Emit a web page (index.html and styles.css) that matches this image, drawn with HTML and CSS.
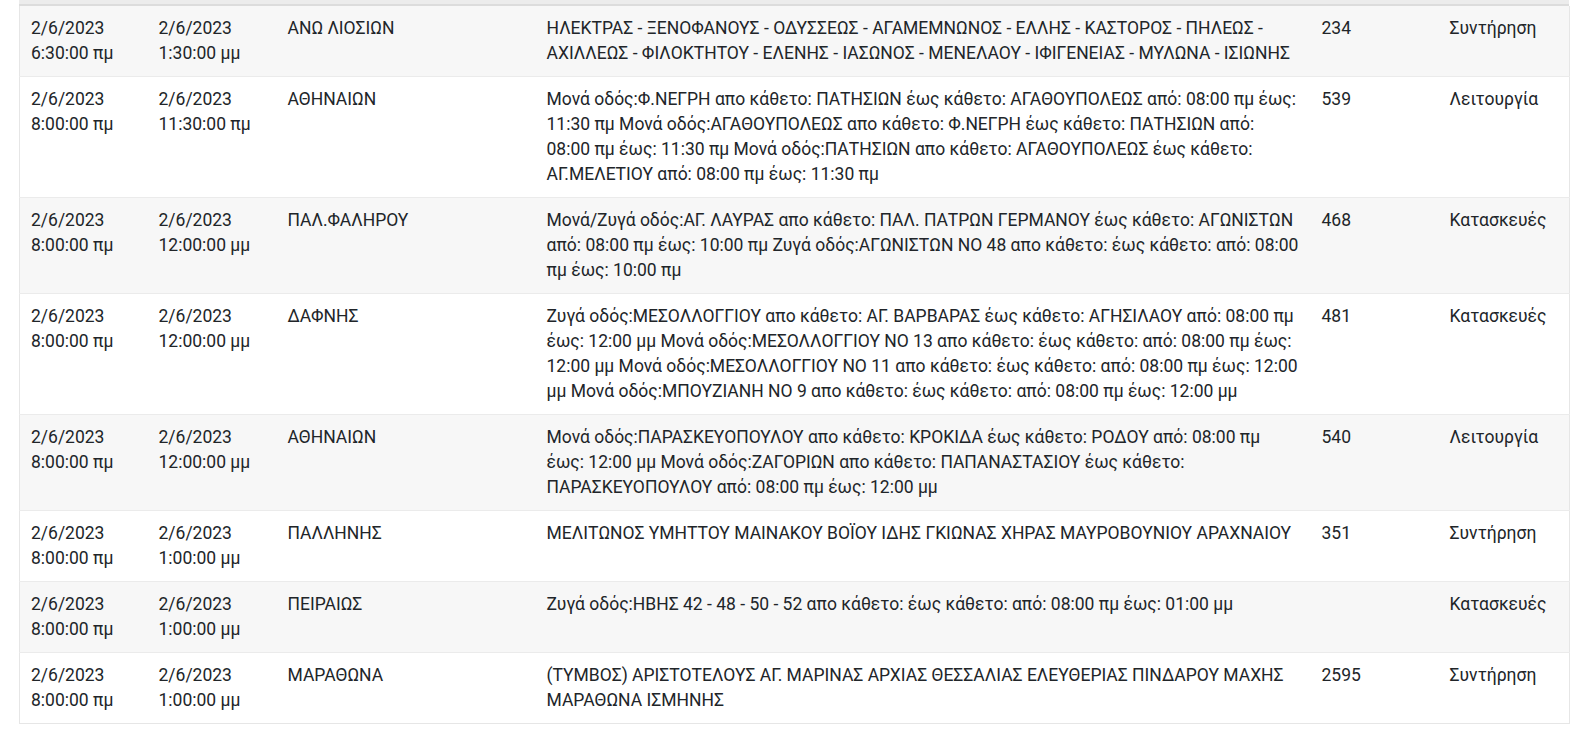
FILE: index.html
```html
<!DOCTYPE html>
<html lang="el">
<head>
    <meta charset="UTF-8">
    <meta name="viewport" content="width=device-width, initial-scale=1.0">
    <title>Διακοπές κυκλοφορίας</title>
    <link rel="stylesheet" href="styles.css">
</head>
<body>

    <div class="container">
        <div class="table-top"></div>
        <table class="works-table">
            <colgroup>
                <col class="col-from">
                <col class="col-to">
                <col class="col-area">
                <col class="col-desc">
                <col class="col-id">
                <col class="col-type">
            </colgroup>
            <tbody>
                <tr>
                    <td>2/6/2023<br>6:30:00 πμ</td>
                    <td>2/6/2023<br>1:30:00 μμ</td>
                    <td>ΑΝΩ ΛΙΟΣΙΩΝ</td>
                    <td>ΗΛΕΚΤΡΑΣ - ΞΕΝΟΦΑΝΟΥΣ - ΟΔΥΣΣΕΩΣ - ΑΓΑΜΕΜΝΩΝΟΣ - ΕΛΛΗΣ - ΚΑΣΤΟΡΟΣ - ΠΗΛΕΩΣ - ΑΧΙΛΛΕΩΣ - ΦΙΛΟΚΤΗΤΟΥ - ΕΛΕΝΗΣ - ΙΑΣΩΝΟΣ - ΜΕΝΕΛΑΟΥ - ΙΦΙΓΕΝΕΙΑΣ - ΜΥΛΩΝΑ - ΙΣΙΩΝΗΣ</td>
                    <td>234</td>
                    <td>Συντήρηση</td>
                </tr>
                <tr>
                    <td>2/6/2023<br>8:00:00 πμ</td>
                    <td>2/6/2023<br>11:30:00 πμ</td>
                    <td>ΑΘΗΝΑΙΩΝ</td>
                    <td>Μονά οδός:Φ.ΝΕΓΡΗ απο κάθετο: ΠΑΤΗΣΙΩΝ έως κάθετο: ΑΓΑΘΟΥΠΟΛΕΩΣ από: 08:00 πμ έως: 11:30 πμ Μονά οδός:ΑΓΑΘΟΥΠΟΛΕΩΣ απο κάθετο: Φ.ΝΕΓΡΗ έως κάθετο: ΠΑΤΗΣΙΩΝ από: 08:00 πμ έως: 11:30 πμ Μονά οδός:ΠΑΤΗΣΙΩΝ απο κάθετο: ΑΓΑΘΟΥΠΟΛΕΩΣ έως κάθετο: ΑΓ.ΜΕΛΕΤΙΟΥ από: 08:00 πμ έως: 11:30 πμ</td>
                    <td>539</td>
                    <td>Λειτουργία</td>
                </tr>
                <tr>
                    <td>2/6/2023<br>8:00:00 πμ</td>
                    <td>2/6/2023<br>12:00:00 μμ</td>
                    <td>ΠΑΛ.ΦΑΛΗΡΟΥ</td>
                    <td>Μονά/Ζυγά οδός:ΑΓ. ΛΑΥΡΑΣ απο κάθετο: ΠΑΛ. ΠΑΤΡΩΝ ΓΕΡΜΑΝΟΥ έως κάθετο: ΑΓΩΝΙΣΤΩΝ από: 08:00 πμ έως: 10:00 πμ Ζυγά οδός:ΑΓΩΝΙΣΤΩΝ ΝΟ 48 απο κάθετο: έως κάθετο: από: 08:00 πμ έως: 10:00 πμ</td>
                    <td>468</td>
                    <td>Κατασκευές</td>
                </tr>
                <tr>
                    <td>2/6/2023<br>8:00:00 πμ</td>
                    <td>2/6/2023<br>12:00:00 μμ</td>
                    <td>ΔΑΦΝΗΣ</td>
                    <td>Ζυγά οδός:ΜΕΣΟΛΛΟΓΓΙΟΥ απο κάθετο: ΑΓ. ΒΑΡΒΑΡΑΣ έως κάθετο: ΑΓΗΣΙΛΑΟΥ από: 08:00 πμ έως: 12:00 μμ Μονά οδός:ΜΕΣΟΛΛΟΓΓΙΟΥ ΝΟ 13 απο κάθετο: έως κάθετο: από: 08:00 πμ έως: 12:00 μμ Μονά οδός:ΜΕΣΟΛΛΟΓΓΙΟΥ ΝΟ 11 απο κάθετο: έως κάθετο: από: 08:00 πμ έως: 12:00 μμ Μονά οδός:ΜΠΟΥΖΙΑΝΗ ΝΟ 9 απο κάθετο: έως κάθετο: από: 08:00 πμ έως: 12:00 μμ</td>
                    <td>481</td>
                    <td>Κατασκευές</td>
                </tr>
                <tr>
                    <td>2/6/2023<br>8:00:00 πμ</td>
                    <td>2/6/2023<br>12:00:00 μμ</td>
                    <td>ΑΘΗΝΑΙΩΝ</td>
                    <td>Μονά οδός:ΠΑΡΑΣΚΕΥΟΠΟΥΛΟΥ απο κάθετο: ΚΡΟΚΙΔΑ έως κάθετο: ΡΟΔΟΥ από: 08:00 πμ έως: 12:00 μμ Μονά οδός:ΖΑΓΟΡΙΩΝ απο κάθετο: ΠΑΠΑΝΑΣΤΑΣΙΟΥ έως κάθετο: ΠΑΡΑΣΚΕΥΟΠΟΥΛΟΥ από: 08:00 πμ έως: 12:00 μμ</td>
                    <td>540</td>
                    <td>Λειτουργία</td>
                </tr>
                <tr>
                    <td>2/6/2023<br>8:00:00 πμ</td>
                    <td>2/6/2023<br>1:00:00 μμ</td>
                    <td>ΠΑΛΛΗΝΗΣ</td>
                    <td>ΜΕΛΙΤΩΝΟΣ ΥΜΗΤΤΟΥ ΜΑΙΝΑΚΟΥ ΒΟΪΟΥ ΙΔΗΣ ΓΚΙΩΝΑΣ ΧΗΡΑΣ ΜΑΥΡΟΒΟΥΝΙΟΥ ΑΡΑΧΝΑΙΟΥ</td>
                    <td>351</td>
                    <td>Συντήρηση</td>
                </tr>
                <tr>
                    <td>2/6/2023<br>8:00:00 πμ</td>
                    <td>2/6/2023<br>1:00:00 μμ</td>
                    <td>ΠΕΙΡΑΙΩΣ</td>
                    <td>Ζυγά οδός:ΗΒΗΣ 42 - 48 - 50 - 52 απο κάθετο: έως κάθετο: από: 08:00 πμ έως: 01:00 μμ</td>
                    <td></td>
                    <td>Κατασκευές</td>
                </tr>
                <tr>
                    <td>2/6/2023<br>8:00:00 πμ</td>
                    <td>2/6/2023<br>1:00:00 μμ</td>
                    <td>ΜΑΡΑΘΩΝΑ</td>
                    <td>(ΤΥΜΒΟΣ) ΑΡΙΣΤΟΤΕΛΟΥΣ ΑΓ. ΜΑΡΙΝΑΣ ΑΡΧΙΑΣ ΘΕΣΣΑΛΙΑΣ ΕΛΕΥΘΕΡΙΑΣ ΠΙΝΔΑΡΟΥ ΜΑΧΗΣ ΜΑΡΑΘΩΝΑ ΙΣΜΗΝΗΣ</td>
                    <td>2595</td>
                    <td>Συντήρηση</td>
                </tr>
            </tbody>
        </table>
    </div>

</body>
</html>
```

FILE: styles.css
```css
* {
    box-sizing: border-box;
    margin: 0;
    padding: 0;
}
body {
    font-family: Roboto, 'Liberation Sans', sans-serif;
    font-size: 17.5px;
    line-height: 25px;
    color: #212529;
    background-color: #fff;
}
.container {
    padding: 0 8px 0 19px;
}
.table-top {
    height: 6px;
    background-color: #ececec;
    border-bottom: 2px solid #dcdcdc;
}
.works-table {
    width: 100%;
    table-layout: fixed;
    border-collapse: collapse;
    border: 1px solid #e6e6e6;
    border-top: none;
}
.col-from { width: 128px; }
.col-to { width: 129px; }
.col-area { width: 259px; }
.col-desc { width: 775px; }
.col-id { width: 128px; }
.col-type { width: 131px; }
.works-table td {
    padding: 10px 11px;
    vertical-align: top;
    text-align: left;
    border-top: 1px solid #ebebeb;
}
.works-table tr:first-child td {
    border-top: none;
}
.works-table tr:nth-child(odd) {
    background-color: #f7f7f7;
}
```
